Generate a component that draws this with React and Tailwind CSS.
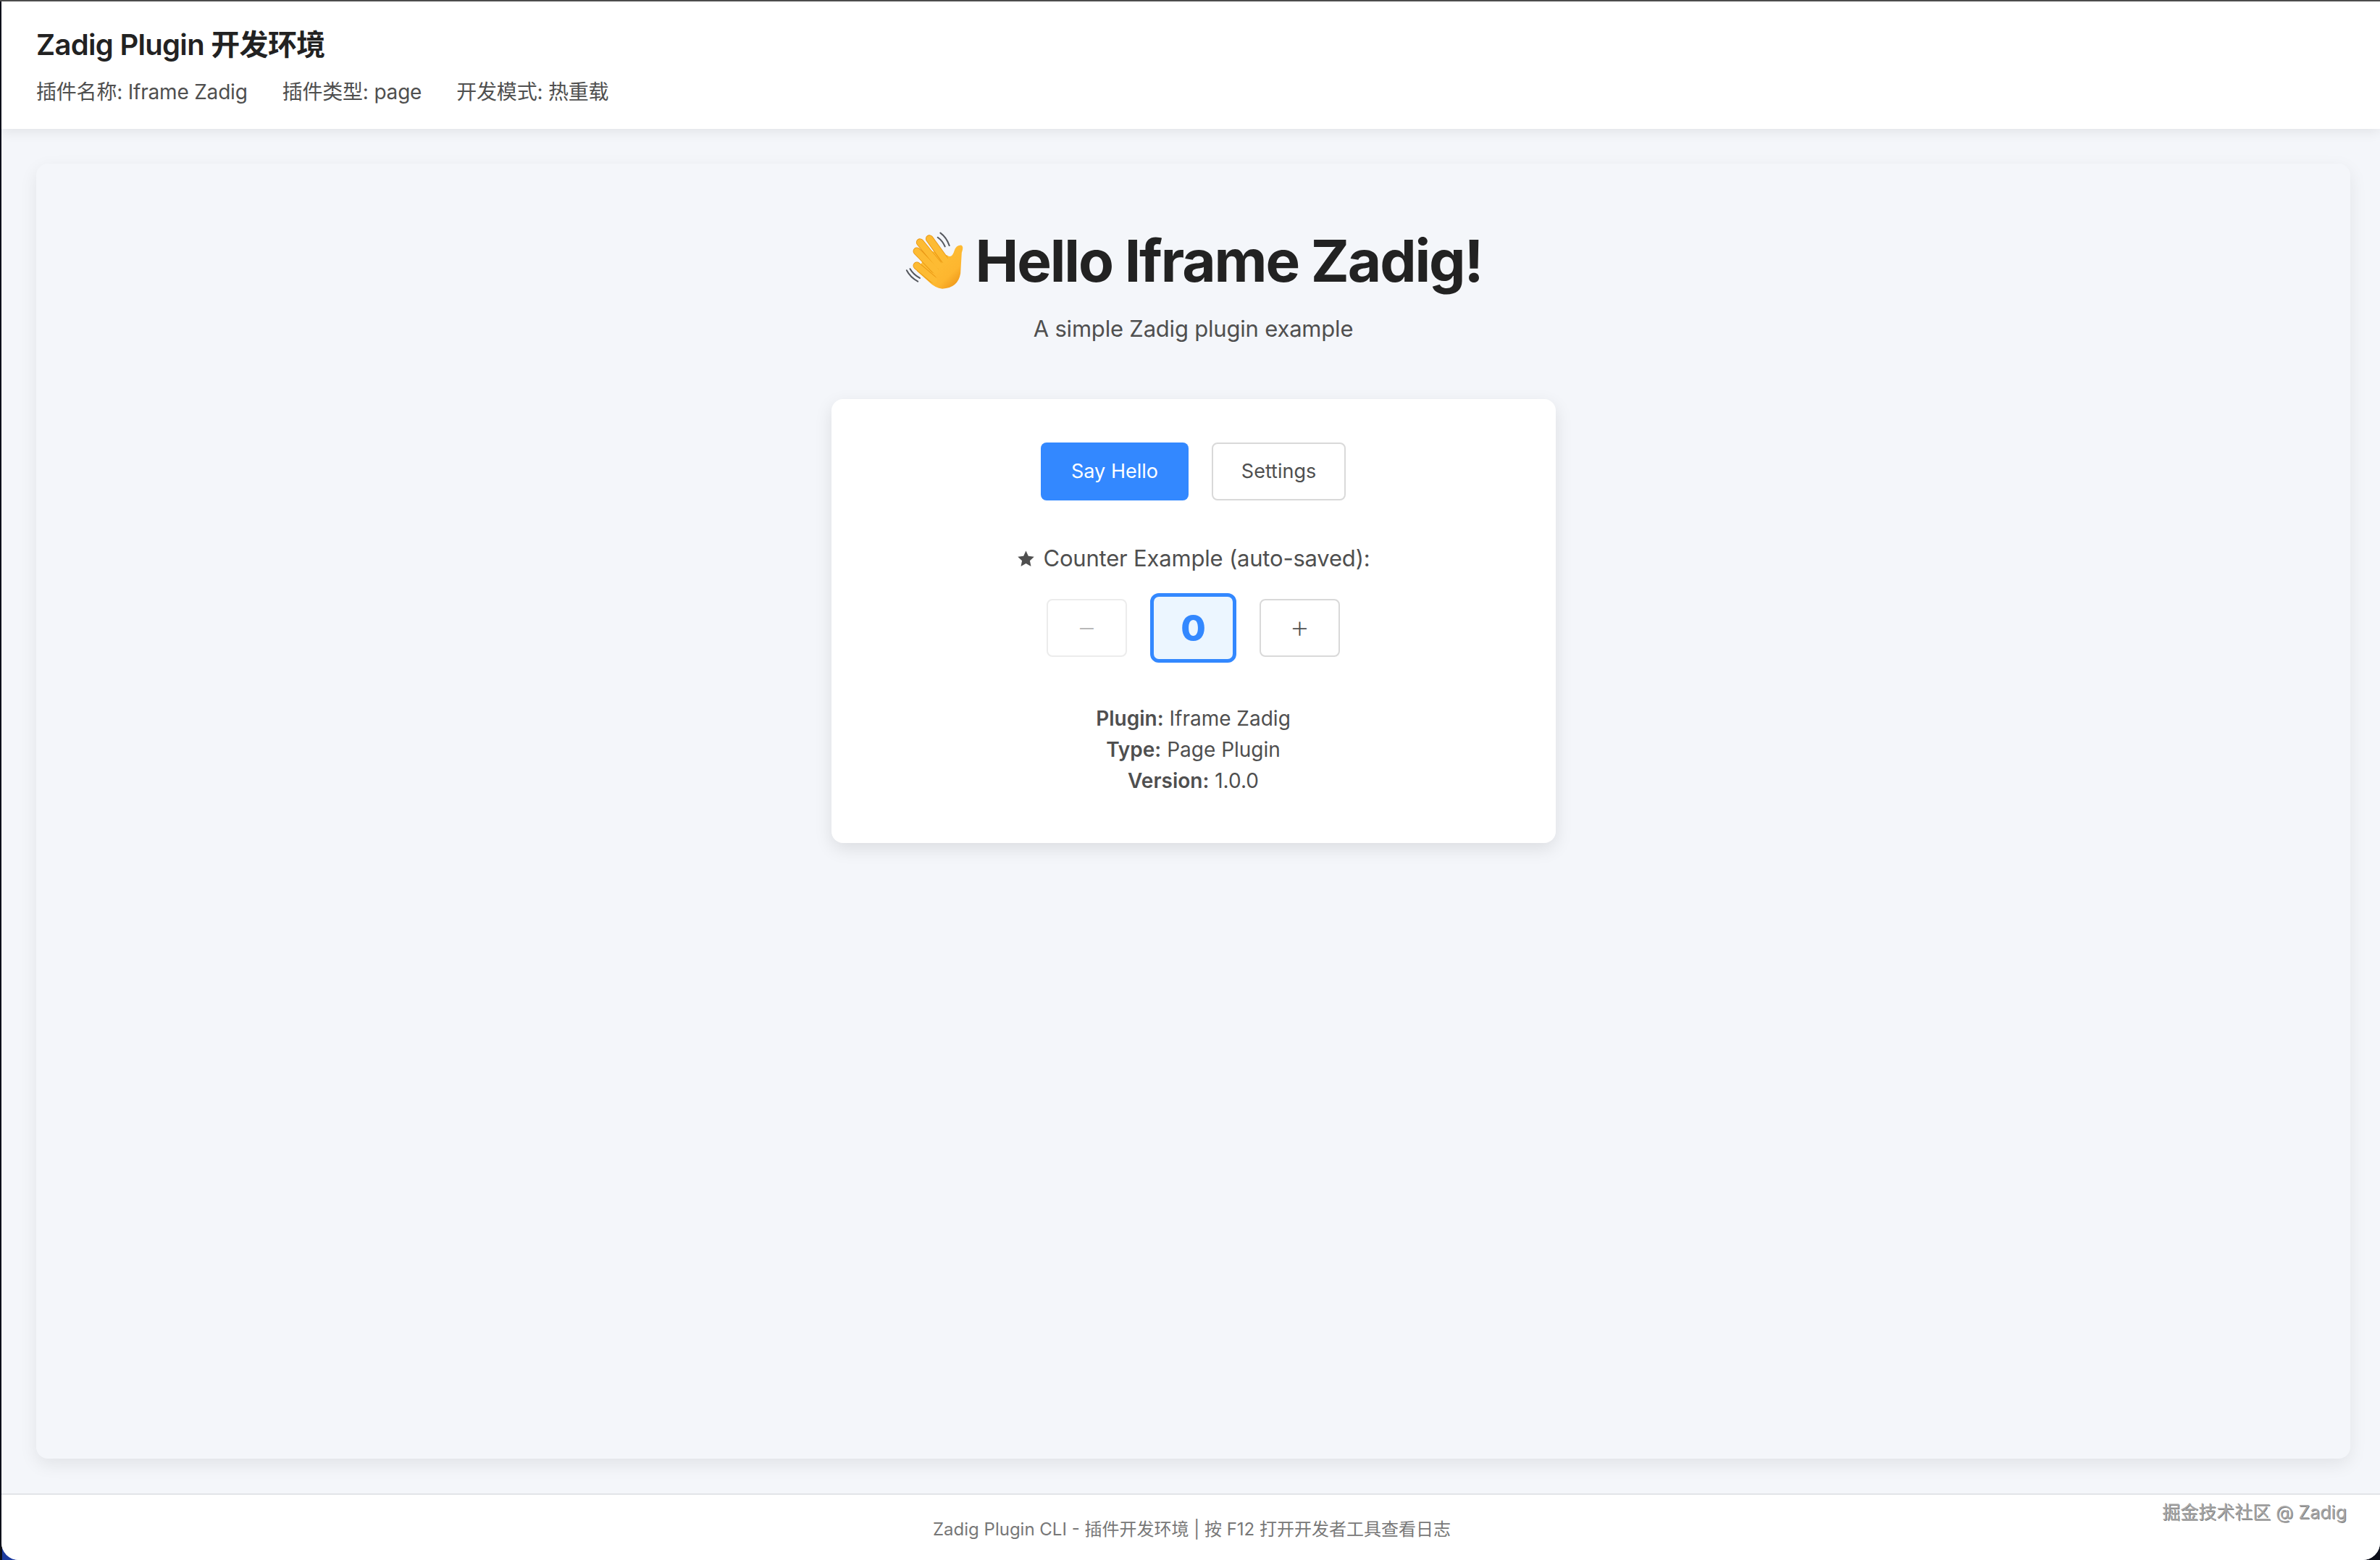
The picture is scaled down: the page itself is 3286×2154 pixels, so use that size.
import React from 'react';

function WaveEmoji() {
    return (
        <svg viewBox="50 50 250 245" className="w-[84px] h-[82px] shrink-0">
            <defs>
                <linearGradient id="palm" x1="0" y1="0" x2="1" y2="1">
                    <stop offset="0" stopColor="#ffc43a" />
                    <stop offset="0.7" stopColor="#fdb62f" />
                    <stop offset="1" stopColor="#e8890f" />
                </linearGradient>
            </defs>
            {/* motion lines */}
            <g fill="none" stroke="#55585e" strokeWidth="6" strokeLinecap="round">
                <path d="M197 58 Q222 76 234 110" />
                <path d="M186 76 Q206 90 216 114" />
                <path d="M58 212 Q72 240 104 258" />
                <path d="M72 206 Q84 228 112 244" />
            </g>
            <path d="M150 130 L225 150 Q245 165 255 130 Q262 108 282 108 Q295 112 285 140 L280 225 Q270 285 205 288 Q175 285 150 260 L100 215 Z" fill="url(#palm)" />
            {/* fingers */}
            <g fill="none" strokeLinecap="round">
                <g stroke="#e8940f" strokeWidth="32">
                    <path d="M100 193 L165 248" />
                    <path d="M100 133 L172 208" />
                    <path d="M113 97 L185 185" />
                    <path d="M152 82 L212 165" />
                </g>
                <g stroke="#fdbb33" strokeWidth="27">
                    <path d="M100 193 L170 252" />
                    <path d="M100 133 L176 212" />
                    <path d="M113 97 L190 190" />
                    <path d="M152 82 L216 170" />
                </g>
            </g>
        </svg>
    );
}

function Info({ label, value }) {
    return (
        <div>
            <strong className="font-semibold">{label}</strong> {value}
        </div>
    );
}

export default function App() {
    return (
        <div className="relative h-screen w-full border-t-2 border-[#4d4d4d] bg-[#0d0f1a] pl-[2px] font-['Inter','Noto_Sans_CJK_SC',sans-serif]">
            {/* wallpaper peeking through the bottom left window corner */}
            <div className="absolute bottom-0 left-[3px] h-[24px] w-[24px] bg-[#1c3a9e]" />
            <div className="relative flex h-full flex-col overflow-hidden rounded-b-[24px] bg-[#f4f6fa]">
                <header className="relative z-10 h-[176px] shrink-0 bg-white px-[48px] pt-[36px] shadow-[0_4px_16px_rgba(0,0,0,0.08)]">
                    <h1 className="text-[40px] leading-[48px] font-semibold tracking-[-0.7px] text-[#222222]">Zadig Plugin 开发环境</h1>
                    <div className="mt-[21px] flex gap-[48px] text-[28px] leading-[40px] tracking-[-0.2px] text-[#4f4f4f]">
                        <span>插件名称: Iframe Zadig</span>
                        <span>插件类型: page</span>
                        <span>开发模式: 热重载</span>
                    </div>
                </header>

                <main className="min-h-0 flex-1 py-[48px] pl-[48px] pr-[41px]">
                    <div className="flex h-full flex-col items-center rounded-[16px] bg-[#f4f6fa] pt-[86px] shadow-[0_8px_24px_rgba(0,0,0,0.08)]">
                        <h2 className="flex items-center justify-center gap-[14px] text-[80px] leading-[96px] font-bold tracking-[-2.1px] text-[#222222]">
                            <WaveEmoji />
                            <span>Hello Iframe Zadig!</span>
                        </h2>
                        <p className="mt-[22px] text-[31px] leading-[48px] tracking-[-0.2px] text-[#4f4f4f]">A simple Zadig plugin example</p>

                        <section className="mt-[73px] flex w-[1000px] flex-col items-center rounded-[16px] bg-white px-[48px] pt-[60px] pb-[64px] shadow-[0_8px_24px_rgba(0,0,0,0.10)]">
                            <div className="flex gap-[32px]">
                                <button className="h-[80px] w-[204px] rounded-[8px] bg-[#3388ff] text-[27px] text-white">Say Hello</button>
                                <button className="h-[80px] w-[185px] rounded-[8px] border-2 border-[#d9d9d9] bg-white text-[27px] text-[#4f4f4f]">Settings</button>
                            </div>

                            <p className="mt-[56px] flex items-center gap-[12px] text-[31px] leading-[48px] tracking-[-0.2px] text-[#4f4f4f]">
                                <svg viewBox="0 0 24 24" className="h-[25px] w-[25px] fill-[#4f4f4f]">
                                    <path d="M12 1.5l3.2 7 7.6.9-5.6 5.2 1.5 7.5L12 18.3l-6.7 3.8 1.5-7.5L1.2 9.4l7.6-.9z" />
                                </svg>
                                <span>Counter Example (auto-saved):</span>
                            </p>

                            <div className="mt-[24px] flex items-center gap-[32px]">
                                <button className="h-[80px] w-[111px] rounded-[8px] border-2 border-[#ececec] bg-white pb-[4px] text-[44px] font-extralight text-[#b8b8b8]">−</button>
                                <div className="flex h-[96px] w-[119px] items-center justify-center rounded-[12px] border-[5px] border-[#3388ff] bg-[#ecf6ff] text-[50px] font-extrabold text-[#3388ff]">0</div>
                                <button className="h-[80px] w-[111px] rounded-[8px] border-2 border-[#d9d9d9] bg-white pb-[4px] text-[44px] font-extralight text-[#4f4f4f]">+</button>
                            </div>

                            <div className="mt-[56px] text-center text-[28px] leading-[43px] text-[#4f4f4f]">
                                <Info label="Plugin:" value="Iframe Zadig" />
                                <Info label="Type:" value="Page Plugin" />
                                <Info label="Version:" value="1.0.0" />
                            </div>
                        </section>
                    </div>
                </main>

                <footer className="relative h-[92px] shrink-0 border-t-2 border-[#e2e4e8] bg-white pt-[30px] pl-[3px] text-center text-[24px] leading-[36px] text-[#777777]">
                    Zadig Plugin CLI - 插件开发环境 | 按 F12 打开开发者工具查看日志
                    <span className="absolute top-[6px] right-[46px] text-[25px] leading-[36px] text-[#a6a6a6] [text-shadow:1px_1px_0_rgba(0,0,0,0.5)]">掘金技术社区 @ Zadig</span>
                </footer>
            </div>
        </div>
    );
}
